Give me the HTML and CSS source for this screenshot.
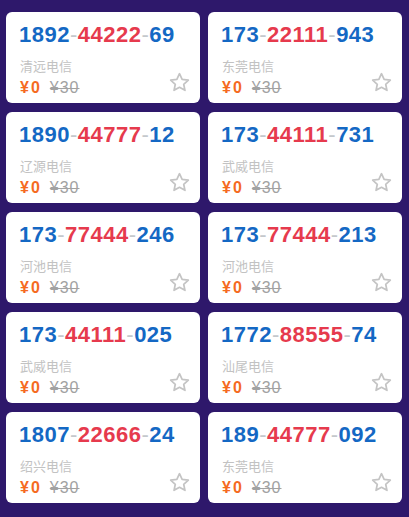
FILE: index.html
```html
<!DOCTYPE html>
<html lang="zh">
<head>
<meta charset="utf-8">
<link rel="stylesheet" href="styles.css">
</head>
<body>
<div class="grid">
  <div class="card"><div class="num"><span class="b">1892</span><span class="d">-</span><span class="r">44222</span><span class="d">-</span><span class="b">69</span></div><div class="bottom"><div class="info"><div class="loc">清远电信</div><div class="price"><span class="now">¥0</span><span class="old">¥30</span></div></div><svg class="star" viewBox="0 0 24 24"><path d="M12 2.8l2.75 5.9 6.45.75-4.8 4.4 1.3 6.35L12 17l-5.7 3.2 1.3-6.35-4.8-4.4 6.45-.75z"/></svg></div></div>
  <div class="card"><div class="num"><span class="b">173</span><span class="d">-</span><span class="r">22111</span><span class="d">-</span><span class="b">943</span></div><div class="bottom"><div class="info"><div class="loc">东莞电信</div><div class="price"><span class="now">¥0</span><span class="old">¥30</span></div></div><svg class="star" viewBox="0 0 24 24"><path d="M12 2.8l2.75 5.9 6.45.75-4.8 4.4 1.3 6.35L12 17l-5.7 3.2 1.3-6.35-4.8-4.4 6.45-.75z"/></svg></div></div>
  <div class="card"><div class="num"><span class="b">1890</span><span class="d">-</span><span class="r">44777</span><span class="d">-</span><span class="b">12</span></div><div class="bottom"><div class="info"><div class="loc">辽源电信</div><div class="price"><span class="now">¥0</span><span class="old">¥30</span></div></div><svg class="star" viewBox="0 0 24 24"><path d="M12 2.8l2.75 5.9 6.45.75-4.8 4.4 1.3 6.35L12 17l-5.7 3.2 1.3-6.35-4.8-4.4 6.45-.75z"/></svg></div></div>
  <div class="card"><div class="num"><span class="b">173</span><span class="d">-</span><span class="r">44111</span><span class="d">-</span><span class="b">731</span></div><div class="bottom"><div class="info"><div class="loc">武威电信</div><div class="price"><span class="now">¥0</span><span class="old">¥30</span></div></div><svg class="star" viewBox="0 0 24 24"><path d="M12 2.8l2.75 5.9 6.45.75-4.8 4.4 1.3 6.35L12 17l-5.7 3.2 1.3-6.35-4.8-4.4 6.45-.75z"/></svg></div></div>
  <div class="card"><div class="num"><span class="b">173</span><span class="d">-</span><span class="r">77444</span><span class="d">-</span><span class="b">246</span></div><div class="bottom"><div class="info"><div class="loc">河池电信</div><div class="price"><span class="now">¥0</span><span class="old">¥30</span></div></div><svg class="star" viewBox="0 0 24 24"><path d="M12 2.8l2.75 5.9 6.45.75-4.8 4.4 1.3 6.35L12 17l-5.7 3.2 1.3-6.35-4.8-4.4 6.45-.75z"/></svg></div></div>
  <div class="card"><div class="num"><span class="b">173</span><span class="d">-</span><span class="r">77444</span><span class="d">-</span><span class="b">213</span></div><div class="bottom"><div class="info"><div class="loc">河池电信</div><div class="price"><span class="now">¥0</span><span class="old">¥30</span></div></div><svg class="star" viewBox="0 0 24 24"><path d="M12 2.8l2.75 5.9 6.45.75-4.8 4.4 1.3 6.35L12 17l-5.7 3.2 1.3-6.35-4.8-4.4 6.45-.75z"/></svg></div></div>
  <div class="card"><div class="num"><span class="b">173</span><span class="d">-</span><span class="r">44111</span><span class="d">-</span><span class="b">025</span></div><div class="bottom"><div class="info"><div class="loc">武威电信</div><div class="price"><span class="now">¥0</span><span class="old">¥30</span></div></div><svg class="star" viewBox="0 0 24 24"><path d="M12 2.8l2.75 5.9 6.45.75-4.8 4.4 1.3 6.35L12 17l-5.7 3.2 1.3-6.35-4.8-4.4 6.45-.75z"/></svg></div></div>
  <div class="card"><div class="num"><span class="b">1772</span><span class="d">-</span><span class="r">88555</span><span class="d">-</span><span class="b">74</span></div><div class="bottom"><div class="info"><div class="loc">汕尾电信</div><div class="price"><span class="now">¥0</span><span class="old">¥30</span></div></div><svg class="star" viewBox="0 0 24 24"><path d="M12 2.8l2.75 5.9 6.45.75-4.8 4.4 1.3 6.35L12 17l-5.7 3.2 1.3-6.35-4.8-4.4 6.45-.75z"/></svg></div></div>
  <div class="card"><div class="num"><span class="b">1807</span><span class="d">-</span><span class="r">22666</span><span class="d">-</span><span class="b">24</span></div><div class="bottom"><div class="info"><div class="loc">绍兴电信</div><div class="price"><span class="now">¥0</span><span class="old">¥30</span></div></div><svg class="star" viewBox="0 0 24 24"><path d="M12 2.8l2.75 5.9 6.45.75-4.8 4.4 1.3 6.35L12 17l-5.7 3.2 1.3-6.35-4.8-4.4 6.45-.75z"/></svg></div></div>
  <div class="card"><div class="num"><span class="b">189</span><span class="d">-</span><span class="r">44777</span><span class="d">-</span><span class="b">092</span></div><div class="bottom"><div class="info"><div class="loc">东莞电信</div><div class="price"><span class="now">¥0</span><span class="old">¥30</span></div></div><svg class="star" viewBox="0 0 24 24"><path d="M12 2.8l2.75 5.9 6.45.75-4.8 4.4 1.3 6.35L12 17l-5.7 3.2 1.3-6.35-4.8-4.4 6.45-.75z"/></svg></div></div>
</div>
</body>
</html>
```
FILE: styles.css
```css
html, body {
  margin: 0;
  padding: 0;
  background: #2e186b;
}
body {
  font-family: "Liberation Sans", Arial, "Noto Sans CJK SC", sans-serif;
}
.grid {
  display: grid;
  grid-template-columns: 194px 194px;
  column-gap: 8px;
  row-gap: 9px;
  padding: 12px 7px 0 6px;
}
.card {
  background: #fff;
  border-radius: 6px;
  height: 91px;
  box-sizing: border-box;
  padding: 10px 9px 0 13px;
}
.num {
  font-size: 22px;
  font-weight: bold;
  line-height: 25px;
  letter-spacing: 0.5px;
  white-space: nowrap;
}
.b { color: #1468c4; }
.r { color: #e63a4d; }
.d { color: #c4c8cc; font-weight: normal; }
.bottom {
  display: flex;
  justify-content: space-between;
  align-items: flex-end;
  margin-top: 10px;
}
.loc {
  font-family: "Noto Sans CJK SC", sans-serif;
  font-size: 13px;
  line-height: 18px;
  color: #c2c2c2;
  padding-left: 1px;
}
.price {
  line-height: 19px;
  margin-top: 3px;
  padding-left: 1px;
}
.now {
  color: #f56a1f;
  font-weight: bold;
  font-size: 16px;
  letter-spacing: 2px;
  margin-right: 8px;
}
.old {
  color: #a2a2a2;
  font-size: 16px;
  letter-spacing: 1px;
  text-decoration: line-through;
}
.star {
  width: 23px;
  height: 23px;
  margin-bottom: 3px;
  fill: none;
  stroke: #c4c4c4;
  stroke-width: 1.8;
  stroke-linejoin: round;
}
```
